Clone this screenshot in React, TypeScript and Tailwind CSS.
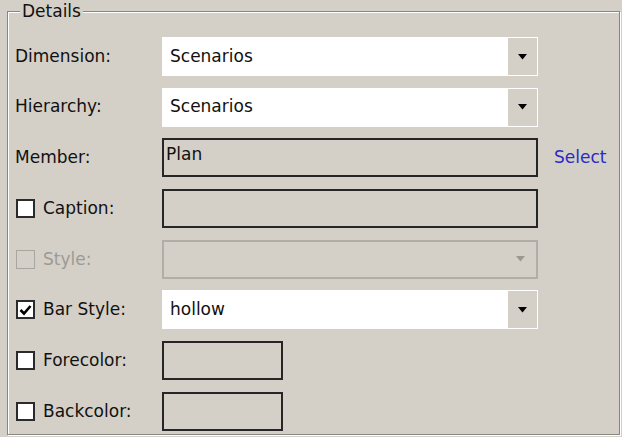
import React from 'react'

function Arrow({ disabled = false }: { disabled?: boolean }) {
  return (
    <svg width="9" height="6" viewBox="0 0 9 6" className="block">
      <path d="M0 0h9L4.5 5.5z" fill={disabled ? '#9a9892' : '#000'} />
    </svg>
  )
}

function Combo({ value }: { value: string }) {
  return (
    <div className="flex h-full w-[376px] border border-white bg-white">
      <div className="flex flex-1 items-center pl-[7px]">{value}</div>
      <div className="flex w-[29px] items-center justify-center bg-[#d4d0c8]">
        <Arrow />
      </div>
    </div>
  )
}

function CheckBox({ checked = false, disabled = false }: { checked?: boolean; disabled?: boolean }) {
  return (
    <div
      className={`ml-[1px] mr-[8px] flex h-[19px] w-[19px] shrink-0 items-center justify-center ${
        disabled ? 'border border-[#a8a6a0] bg-[#d4d0c8]' : 'border-2 border-[#2b2b2b] bg-white'
      }`}
    >
      {checked && (
        <svg width="13" height="12" viewBox="0 0 13 12">
          <path d="M1.5 6l3.5 3.5L11.5 2" fill="none" stroke="#000" strokeWidth="2.6" />
        </svg>
      )}
    </div>
  )
}

function Row({ label, children }: { label: React.ReactNode; children: React.ReactNode }) {
  return (
    <div className="flex h-[39px] items-center">
      <div className="flex w-[147px] shrink-0 items-center">{label}</div>
      {children}
    </div>
  )
}

export default function App() {
  return (
    <div className="h-[437px] w-[622px] overflow-hidden bg-[#d4d0c8] pl-[7px] font-['DejaVu_Sans',sans-serif] text-[17px] text-[#111]">
      <fieldset className="h-[435px] w-[613px] border border-[#888680] shadow-[inset_1px_1px_0_#fff,1px_1px_0_#fff]">
        <legend className="ml-[12px] h-[23px] bg-[#d4d0c8] px-[2px] leading-[23px]">Details</legend>

        <div className="flex flex-col gap-[11.7px] pl-[7px] pt-[14px]">
          <Row label="Dimension:">
            <Combo value="Scenarios" />
          </Row>
          <Row label="Hierarchy:">
            <Combo value="Scenarios" />
          </Row>
          <Row label="Member:">
            <div className="h-full w-[376px] border-2 border-[#262626] pl-[2px] pt-[4px] leading-[20px]">Plan</div>
            <a className="ml-[16px] text-[#2a2ac4]">Select</a>
          </Row>
          <Row
            label={
              <>
                <CheckBox />
                Caption:
              </>
            }
          >
            <div className="h-full w-[376px] border-2 border-[#262626]" />
          </Row>
          <Row
            label={
              <>
                <CheckBox disabled />
                <span className="text-[#9c9a94]">Style:</span>
              </>
            }
          >
            <div className="flex h-full w-[376px] items-center justify-end border-2 border-[#b0aea8] pr-[11px]">
              <Arrow disabled />
            </div>
          </Row>
          <Row
            label={
              <>
                <CheckBox checked />
                Bar Style:
              </>
            }
          >
            <Combo value="hollow" />
          </Row>
          <Row
            label={
              <>
                <CheckBox />
                Forecolor:
              </>
            }
          >
            <div className="h-full w-[121px] border-2 border-[#262626]" />
          </Row>
          <Row
            label={
              <>
                <CheckBox />
                Backcolor:
              </>
            }
          >
            <div className="h-full w-[121px] border-2 border-[#262626]" />
          </Row>
        </div>
      </fieldset>
    </div>
  )
}
